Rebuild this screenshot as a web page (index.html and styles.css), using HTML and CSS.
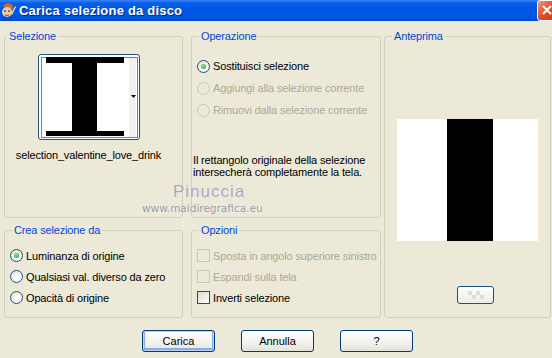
FILE: index.html
```html
<html>
    <head>
        <title>Carica selezione da disco</title>
        <link rel="stylesheet" href="styles.css">
    </head>
    <body>
        <div class="window">
            <div class="titlebar">
                <svg class="appicon" width="16" height="18" viewBox="0 0 16 18">
                    <path d="M3 4 Q6 0 11 2 Q14 4 12 8 L10 7 Q8 4 5 6 Z" fill="#c8702a"/>
                    <ellipse cx="7" cy="10" rx="5" ry="5" fill="#f6c79a"/>
                    <circle cx="5" cy="9" r="1" fill="#2a5db0"/>
                    <circle cx="9" cy="9" r="1" fill="#2a5db0"/>
                    <path d="M5 13 Q7 14 9 13" stroke="#b04020" fill="none"/>
                    <path d="M11 12 L15 4 L16 5 L12 13 Z" fill="#e8e0d0"/>
                </svg>
                <span class="title">Carica selezione da disco</span>
                <div class="close">
                    <svg width="18" height="19" viewBox="0 0 18 19">
                        <path d="M5 5 L13 13 M13 5 L5 13" stroke="#fff" stroke-width="2"/>
                    </svg>
                </div>
            </div>
            <div class="client">
                <div class="panels">
                    <fieldset class="group sel">
                        <legend>Selezione</legend>
                        <div class="thumb">
                            <svg width="100" height="84" viewBox="0 0 100 84">
                                <rect x="90" y="2" width="7" height="80" fill="#f0f0ee"/>
                                <rect x="7" y="2" width="78" height="6" fill="#000"/>
                                <rect x="33" y="8" width="25" height="68" fill="#000"/>
                                <rect x="7" y="76" width="78" height="5" fill="#000"/>
                                <rect x="2.5" y="2.5" width="96" height="80" fill="none" stroke="#000" stroke-dasharray="1 1"/>
                                <path d="M92 40 L97 40 L94.5 43 Z" fill="#000"/>
                            </svg>
                        </div>
                        <div class="thumbname">selection_valentine_love_drink</div>
                    </fieldset>

                    <fieldset class="group op">
                        <legend>Operazione</legend>
                        <div class="opt"><span class="radio on"></span>Sostituisci selezione</div>
                        <div class="opt off"><span class="radio"></span>Aggiungi alla selezione corrente</div>
                        <div class="opt off"><span class="radio"></span>Rimuovi dalla selezione corrente</div>
                        <p class="note">Il rettangolo originale della selezione intersecherà completamente la tela.</p>
                    </fieldset>

                    <fieldset class="group prev">
                        <legend>Anteprima</legend>
                        <div class="preview"><div class="bar"></div></div>
                        <div class="minibtn">
                            <svg width="20" height="10" viewBox="0 0 20 10">
                                <rect x="2" y="1" width="4" height="4" fill="#dcdcdc"/>
                                <rect x="10" y="1" width="4" height="4" fill="#dcdcdc"/>
                                <rect x="6" y="5" width="4" height="4" fill="#dcdcdc"/>
                                <rect x="14" y="5" width="4" height="4" fill="#dcdcdc"/>
                            </svg>
                        </div>
                    </fieldset>

                    <fieldset class="group crea">
                        <legend>Crea selezione da</legend>
                        <div class="opt"><span class="radio on"></span>Luminanza di origine</div>
                        <div class="opt"><span class="radio"></span>Qualsiasi val. diverso da zero</div>
                        <div class="opt"><span class="radio"></span>Opacità di origine</div>
                    </fieldset>

                    <fieldset class="group opz">
                        <legend>Opzioni</legend>
                        <div class="opt off"><span class="check"></span>Sposta in angolo superiore sinistro</div>
                        <div class="opt off"><span class="check"></span>Espandi sulla tela</div>
                        <div class="opt"><span class="check"></span>Inverti selezione</div>
                    </fieldset>
                </div>
                <div class="buttons">
                    <button class="btn default">Carica</button>
                    <button class="btn">Annulla</button>
                    <button class="btn">?</button>
                </div>
            </div>
            <div class="watermark">
                <div class="wm-name">Pinuccia</div>
                <div class="wm-site">www.maidiregrafica.eu</div>
            </div>
        </div>
    </body>
</html>
```

FILE: styles.css
```css
body{
    margin: 0;
    background: #ece9d8;
}
.window{
    position: relative;
    width: 552px;
    height: 358px;
    overflow: hidden;
    background: #ece9d8;
    font-family: "Liberation Sans", Arial, sans-serif;
    font-size: 11px;
    letter-spacing: -0.15px;
    color: #000;
}
.titlebar{
    height: 21px;
    display: flex;
    align-items: center;
    background: linear-gradient(#3a86f8 0, #0a5fe8 3px, #0058e8 8px, #0054e2 17px, #0048c8 21px);
}
.appicon{
    margin-right: 3px;
}
.title{
    color: #fff;
    font-family: "Liberation Sans", Arial, sans-serif;
    font-weight: bold;
    font-size: 13px;
    letter-spacing: 0.2px;
    text-shadow: 1px 1px 0 #0a2a80;
}
.close{
    margin-left: auto;
    margin-right: -7px;
    width: 20px;
    height: 19px;
    border: 1px solid #fff;
    border-radius: 3px;
    background: linear-gradient(135deg, #f09a80, #e0502e 45%, #c8391a);
}
.close svg{
    display: block;
}
.client{
    padding: 9px 0 0 4px;
}
.panels{
    display: grid;
    grid-template-columns: 179px 198px 170px;
    grid-template-rows: 188px 94px;
    row-gap: 6px;
}
.group{
    margin: 0;
    padding: 0 0 0 5px;
    min-width: 0;
    border: 1px solid #d0d0bf;
    border-radius: 3px;
    box-sizing: border-box;
}
.group legend{
    margin-left: 2px;
    padding: 0 2px;
    color: #0046d5;
    line-height: 13px;
}
.op, .opz{
    margin-left: 8px;
}
.prev{
    margin-left: 3px;
    grid-column: 3;
    grid-row: 1 / 3;
}
.sel{
    display: flex;
    flex-direction: column;
    align-items: center;
    padding: 0 10px 0 0;
}
.thumb{
    margin-top: 11px;
    width: 100px;
    height: 84px;
    border: 1px solid #1c5180;
    border-radius: 3px;
    background: #fff;
}
.thumb svg{
    display: block;
}
.thumbname{
    margin-top: 9px;
    line-height: 13px;
}
.op .opt:first-of-type{
    margin-top: 12px;
}
.opt{
    display: flex;
    align-items: center;
    gap: 3px;
    height: 22px;
    white-space: nowrap;
}
.crea .opt, .opz .opt{
    height: 21px;
}
.crea .opt:first-of-type, .opz .opt:first-of-type{
    margin-top: 8px;
}
.opt.off{
    color: #aca899;
}
.radio{
    width: 11px;
    height: 11px;
    border: 1px solid #1c5180;
    border-radius: 50%;
    background: radial-gradient(circle at 65% 70%, #fff 20%, #dcdad0 100%);
    position: relative;
}
.radio.on::after{
    content: "";
    position: absolute;
    left: 3px;
    top: 3px;
    width: 5px;
    height: 5px;
    border-radius: 50%;
    background: radial-gradient(circle at 40% 40%, #8ee08e, #21a121);
}
.off .radio{
    border-color: #cac8bb;
    background: #ece9d8;
}
.check{
    width: 11px;
    height: 11px;
    border: 1px solid #1c5180;
    background: linear-gradient(135deg, #dcdad0, #fff);
}
.off .check{
    border-color: #cac8bb;
    background: #ece9d8;
}
.note{
    margin: 33px 0 0 -4px;
    line-height: 12px;
    width: 180px;
}
.preview{
    margin: 76px 0 0 7px;
    width: 141px;
    height: 122px;
    background: #fff;
    display: flex;
    justify-content: center;
}
.bar{
    width: 46px;
    margin-left: 5px;
    background: #000;
}
.minibtn{
    margin: 45px 0 0 67px;
    width: 35px;
    height: 16px;
    border: 1px solid #1c5180;
    border-radius: 3px;
    background: linear-gradient(#fff, #ecebe6);
    display: flex;
    align-items: center;
    justify-content: center;
}
.buttons{
    display: flex;
    gap: 26px;
    padding: 12px 0 0 138px;
}
.btn{
    width: 73px;
    height: 22px;
    padding: 0;
    border: 1px solid #003c74;
    border-radius: 3px;
    background: linear-gradient(#fff, #f2f1ec 60%, #e3e2da);
    font-family: "Liberation Sans", Arial, sans-serif;
    font-size: 11px;
    color: #000;
}
.btn.default{
    box-shadow: inset 0 0 0 1px #bcd3f6, inset 0 -1px 0 2px #89adea;
}
.watermark{
    position: absolute;
    left: 142px;
    top: 182px;
    color: #a6a6be;
    text-shadow: 0 0 1px #fff;
}
.wm-name{
    font-family: "Liberation Sans", Arial, sans-serif;
    font-size: 17px;
    letter-spacing: 1px;
    padding-left: 31px;
    line-height: 20px;
}
.wm-site{
    font-family: "DejaVu Sans", sans-serif;
    font-size: 10.5px;
    letter-spacing: 0;
    color: #9898a6;
    line-height: 12px;
    margin-top: 0;
}
```
